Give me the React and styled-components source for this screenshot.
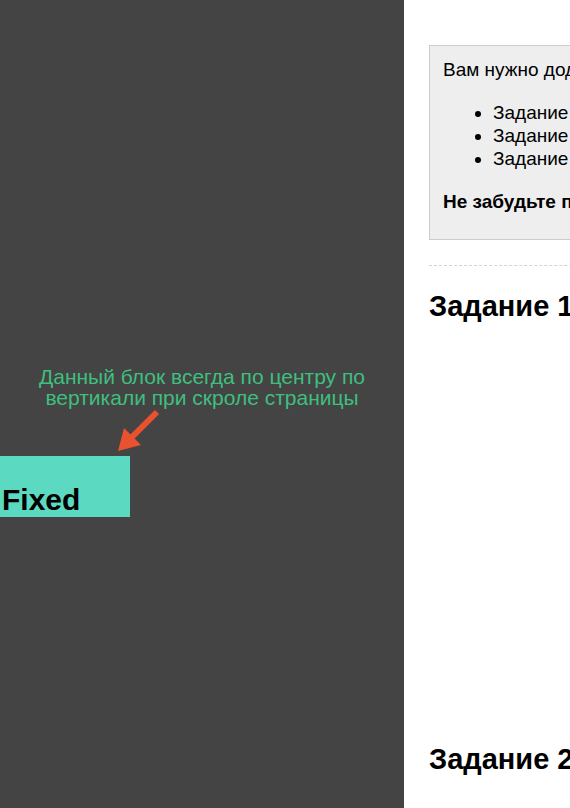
import React from 'react';
import styled, { createGlobalStyle } from 'styled-components';

const GlobalStyle = createGlobalStyle`
  html, body {
    margin: 0;
    padding: 0;
    height: 100%;
    overflow: hidden;
  }
  body {
    font-family: "Liberation Sans", Arial, sans-serif;
    color: #000;
  }
`;

const Page = styled.div`
  display: flex;
  width: 570px;
  height: 808px;
  overflow: hidden;
`;

const Sidebar = styled.aside`
  flex: 0 0 404px;
  background: #444444;
  display: flex;
  flex-direction: column;
  padding-top: 366px;
  box-sizing: border-box;
`;

const Note = styled.p`
  margin: 0;
  text-align: center;
  color: #3fbf7f;
  font-size: 21px;
  line-height: 21px;
`;

const ArrowWrap = styled.div`
  height: 48px;
  padding-left: 114px;
  display: flex;
  align-items: flex-end;
`;

const FixedBlock = styled.div`
  width: 130px;
  height: 61px;
  background: #5cd9c1;
  display: flex;
  align-items: flex-end;
  box-sizing: border-box;
  padding: 0 0 0 2px;
`;

const FixedTitle = styled.h2`
  margin: 0;
  font-size: 30px;
  font-weight: bold;
  line-height: 34px;
`;

const Main = styled.main`
  flex: 1;
  min-width: 0;
  background: #fff;
  overflow: hidden;
  padding: 45px 0 0 25px;
`;

const Content = styled.div`
  width: 860px;
`;

const InfoBox = styled.div`
  background: #eeeeee;
  border: 1px solid #cccccc;
  padding: 12px 13px 14px;
  font-size: 19px;
  line-height: 23px;
`;

const Para = styled.p`
  margin: 0 0 ${(p) => (p.$last ? '12px' : '0')};
  font-weight: ${(p) => (p.$bold ? 'bold' : 'normal')};
`;

const TaskList = styled.ul`
  margin: 20px 0;
  padding-left: 50px;
`;

const Divider = styled.hr`
  border: none;
  border-top: 1px dashed #d4d4d4;
  margin: 25px 0 0;
`;

const Section = styled.section`
  box-sizing: border-box;
  height: 453px;
  padding-top: 23px;
`;

const SectionTitle = styled.h2`
  margin: 0;
  font-size: 29px;
  font-weight: bold;
  line-height: 34px;
`;

function Arrow() {
  return (
    <svg width="48" height="48" viewBox="0 0 48 48">
      <line x1="43" y1="4" x2="17" y2="30" stroke="#e8522f" strokeWidth="6" />
      <polygon points="4,43 10,20 27,37" fill="#e8522f" />
    </svg>
  );
}

export default function App() {
  return (
    <>
      <GlobalStyle />
      <Page>
        <Sidebar>
          <Note>
            Данный блок всегда по центру по
            <br />
            вертикали при скроле страницы
          </Note>
          <ArrowWrap>
            <Arrow />
          </ArrowWrap>
          <FixedBlock>
            <FixedTitle>Fixed</FixedTitle>
          </FixedBlock>
        </Sidebar>
        <Main>
          <Content>
            <InfoBox>
              <Para>Вам нужно доделать следующие задания:</Para>
              <TaskList>
                <li>Задание 1 — фиксированный блок</li>
                <li>Задание 2 — прокрутка страницы</li>
                <li>Задание 3 — выравнивание по центру</li>
              </TaskList>
              <Para $bold $last>Не забудьте проверить результат во всех браузерах!</Para>
            </InfoBox>
            <Divider />
            <Section>
              <SectionTitle>Задание 1</SectionTitle>
            </Section>
            <Section>
              <SectionTitle>Задание 2</SectionTitle>
            </Section>
          </Content>
        </Main>
      </Page>
    </>
  );
}
